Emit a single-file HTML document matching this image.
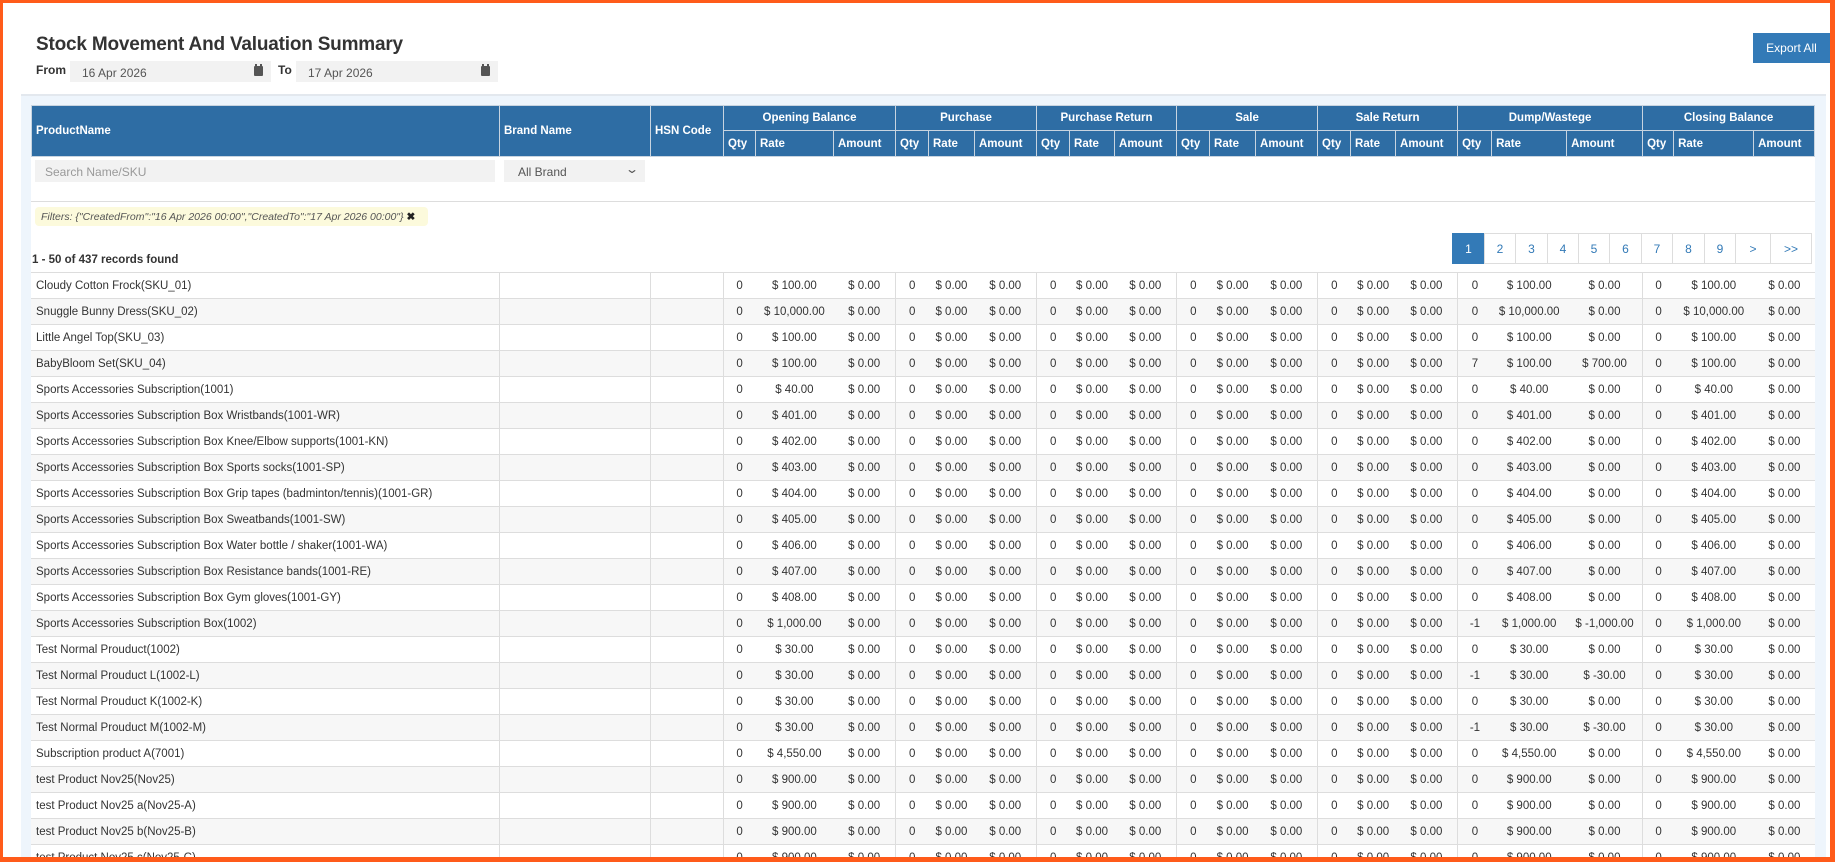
<!DOCTYPE html>
<html><head><meta charset="utf-8"><style>
*{box-sizing:border-box}
html,body{margin:0;width:1835px;height:862px;overflow:hidden}
body{position:relative;font-family:"Liberation Sans",sans-serif;color:#333;background:#fff}
#frame{position:absolute;left:0;top:0;width:1835px;height:862px;border:3px solid #ff5b1a;border-bottom-width:5px;border-right-width:5px;z-index:10;pointer-events:none}
.abs{position:absolute}
h1{position:absolute;left:36px;top:34px;margin:0;font-size:19px;font-weight:bold;color:#333;letter-spacing:-0.2px}
.lbl{font-size:12px;font-weight:bold}
.inp{background:#f2f2f2;font-size:12px;color:#555;padding:5px 12px;height:21px}
.cal{position:absolute;right:8px;top:5px;width:9px;height:10px;background:#555;border-radius:1px}
.cal:before{content:"";position:absolute;left:1px;top:-2px;width:2px;height:3px;background:#555;box-shadow:5px 0 0 #555}
#panel{position:absolute;left:21px;top:94px;width:1805px;height:768px;background:#eef5fc;border-top:2px solid #e3e8ee}
#wrap{position:absolute;left:31px;top:105px;width:1784px;height:757px;background:#fff;overflow:hidden}
table{border-collapse:collapse;table-layout:fixed;width:1784px}
th{background:#2e6da4;color:#fff;font-size:11.5px;font-weight:bold;border:1px solid #c8d4e0;padding:0 4px;text-align:left;white-space:nowrap;overflow:hidden}
th.c{text-align:center}
td{font-size:11.5px;height:26px;padding:0 5px;white-space:nowrap;overflow:hidden;border-top:1px solid #ddd;text-align:center}
td.l{text-align:left;border-right:1px solid #ddd}
td.g{border-right:1px solid #ddd}
tr:nth-child(even) td{background:#f7f7f7}
.pg{position:absolute;top:233px;height:31px;display:flex;left:1453px}
.pg div{border:1px solid #ddd;margin-left:-1px;color:#337ab7;font-size:12px;display:flex;align-items:center;justify-content:center;height:31px}
.pg div.a{background:#337ab7;color:#fff;border-color:#337ab7}
</style></head><body>
<div id="frame"></div>
<h1>Stock Movement And Valuation Summary</h1>
<div class="abs lbl" style="left:36px;top:63px">From</div>
<div class="abs inp" style="left:70px;top:61px;width:201px;height:21px">16 Apr 2026<span class="cal"></span></div>
<div class="abs lbl" style="left:278px;top:63px">To</div>
<div class="abs inp" style="left:296px;top:61px;width:202px;height:21px">17 Apr 2026<span class="cal"></span></div>
<div class="abs" style="left:1753px;top:33px;width:77px;height:30px;background:#337ab7;color:#fff;font-size:12px;display:flex;align-items:center;justify-content:center">Export All</div>
<div id="panel"></div>
<div id="wrap">
<table id="hd">
<colgroup id="cg"></colgroup>
<tr style="height:25px"><th rowspan="2">ProductName</th><th rowspan="2">Brand Name</th><th rowspan="2">HSN Code</th>
<th colspan="3" class="c">Opening Balance</th><th colspan="3" class="c">Purchase</th><th colspan="3" class="c">Purchase Return</th><th colspan="3" class="c">Sale</th><th colspan="3" class="c">Sale Return</th><th colspan="3" class="c">Dump/Wastege</th><th colspan="3" class="c">Closing Balance</th></tr>
<tr style="height:26px" id="sub"></tr>
</table>
<div class="abs inp" style="left:4px;top:55px;width:460px;height:22px;color:#999;padding:5px 10px">Search Name/SKU</div>
<div class="abs inp" style="left:473px;top:55px;width:141px;height:22px;padding:5px 14px">All Brand<span style="position:absolute;right:8px;top:2px;font-size:12px;transform:scaleX(1.4)">&#8964;</span></div>
<div class="abs" style="left:0;top:96px;width:1784px;border-top:1px solid #ddd"></div>
<div class="abs" style="left:4px;top:102px;width:393px;height:19px;background:#fcfadc;border-radius:4px;font-size:10.5px;font-style:italic;color:#555;padding:4px 6px;white-space:nowrap">Filters: {"CreatedFrom":"16 Apr 2026 00:00","CreatedTo":"17 Apr 2026 00:00"} <b style="font-style:normal;color:#222">&#10006;</b></div>
<div class="abs lbl" style="left:1px;top:149px;font-size:11.5px">1 - 50 of 437 records found</div>
<table id="bd" style="position:absolute;left:0;top:167px"><colgroup id="cg2"></colgroup><tbody id="tb"></tbody></table>
</div>
<div class="pg" id="pg"></div>
<script>
var w=[468,151,73,32,78,62,33,46,62,33,45,62,33,46,62,33,45,62,34,75,76,31,80,61];
var c='';w.forEach(function(x){c+='<col style="width:'+x+'px">'});
document.getElementById('cg').innerHTML=c;document.getElementById('cg2').innerHTML=c;
var s='';for(var i=0;i<7;i++)s+='<th>Qty</th><th>Rate</th><th>Amount</th>';
document.getElementById('sub').innerHTML=s;
var R=[["Cloudy Cotton Frock(SKU_01)","100.00"],["Snuggle Bunny Dress(SKU_02)","10,000.00"],["Little Angel Top(SKU_03)","100.00"],["BabyBloom Set(SKU_04)","100.00","7","700.00"],["Sports Accessories Subscription(1001)","40.00"],["Sports Accessories Subscription Box Wristbands(1001-WR)","401.00"],["Sports Accessories Subscription Box Knee/Elbow supports(1001-KN)","402.00"],["Sports Accessories Subscription Box Sports socks(1001-SP)","403.00"],["Sports Accessories Subscription Box Grip tapes (badminton/tennis)(1001-GR)","404.00"],["Sports Accessories Subscription Box Sweatbands(1001-SW)","405.00"],["Sports Accessories Subscription Box Water bottle / shaker(1001-WA)","406.00"],["Sports Accessories Subscription Box Resistance bands(1001-RE)","407.00"],["Sports Accessories Subscription Box Gym gloves(1001-GY)","408.00"],["Sports Accessories Subscription Box(1002)","1,000.00","-1","-1,000.00"],["Test Normal Prouduct(1002)","30.00"],["Test Normal Prouduct L(1002-L)","30.00","-1","-30.00"],["Test Normal Prouduct K(1002-K)","30.00"],["Test Normal Prouduct M(1002-M)","30.00","-1","-30.00"],["Subscription product A(7001)","4,550.00"],["test Product Nov25(Nov25)","900.00"],["test Product Nov25 a(Nov25-A)","900.00"],["test Product Nov25 b(Nov25-B)","900.00"],["test Product Nov25 c(Nov25-C)","900.00"]];
var h='';R.forEach(function(r){var z='<td>0</td><td>$ 0.00</td><td class="g">$ 0.00</td>';
h+='<tr><td class="l">'+r[0]+'</td><td class="l"></td><td class="l"></td><td>0</td><td>$ '+r[1]+'</td><td class="g">$ 0.00</td>'+z+z+z+z+'<td>'+(r[2]||'0')+'</td><td>$ '+r[1]+'</td><td class="g">$ '+(r[3]||'0.00')+'</td><td>0</td><td>$ '+r[1]+'</td><td>$ 0.00</td></tr>';});
document.getElementById('tb').innerHTML=h;
var p=[['1',32],['2',31],['3',32],['4',31],['5',31],['6',32],['7',31],['8',32],['9',31],['&gt;',35],['&gt;&gt;',41]],q='';
p.forEach(function(a,i){q+='<div'+(i==0?' class="a"':'')+' style="width:'+(a[1]+1)+'px">'+a[0]+'</div>'});
document.getElementById('pg').innerHTML=q;
</script>
</body></html>
